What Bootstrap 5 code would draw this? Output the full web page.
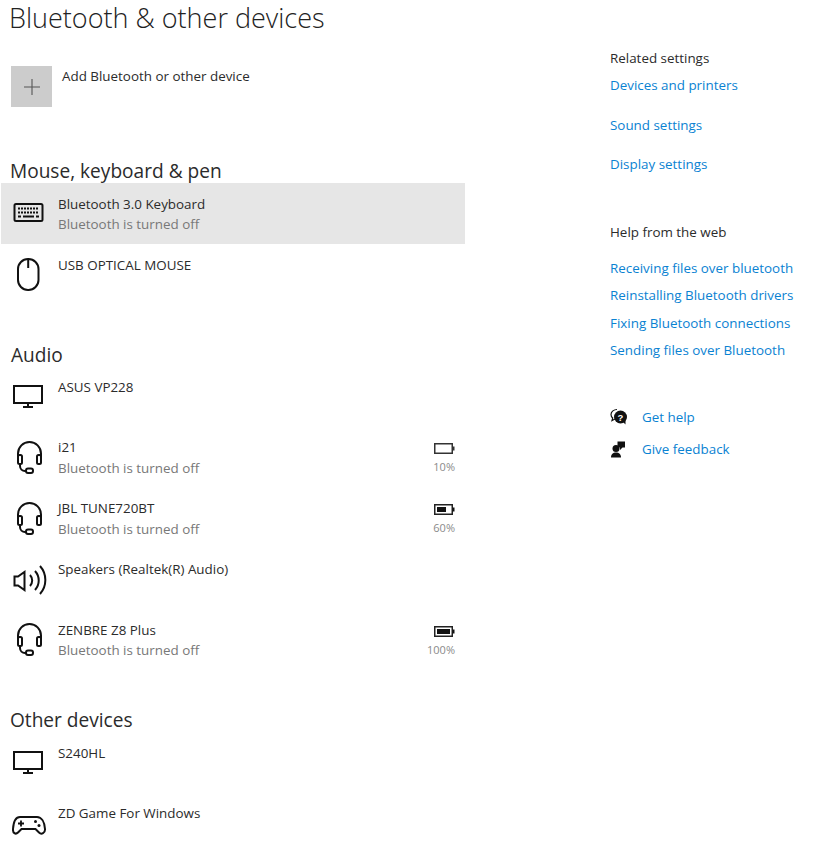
<!DOCTYPE html>
<html lang="en">
<head>
<meta charset="utf-8">
<title>Bluetooth &amp; other devices</title>
<link href="https://cdn.jsdelivr.net/npm/bootstrap@5.3.0/dist/css/bootstrap.min.css" rel="stylesheet">
<style>
body{font-family:"Open Sans","Noto Sans",sans-serif;color:#2b2b2b;background:#fff;font-size:13.4px;overflow:hidden}
.shell{width:814px;height:866px}
.leftpane{width:464px;margin-left:1px;flex:none}
.rightpane{margin-left:145px;width:204px;padding-top:48px}
.page-title{font-size:27px;font-weight:300;line-height:36px;margin:0 0 0 8px;color:#222}
.add-row{padding:30px 0 0 10px;height:122px;gap:10px}
.plus-tile{width:41px;height:41px;background:#ccc;flex:none}
.add-label{line-height:20px}
.sect{font-size:19.1px;font-weight:400;line-height:24px;padding-top:1px;margin:0 0 0 9px;color:#2b2b2b}
.sect-audio{margin-left:10px;margin-bottom:-1px}
.dev{height:61px;padding-left:11px}
.dev-sel{background:#e6e6e6}
.dev-short{height:60.75px}
.dev-tail{height:60.5px}
.ico{width:36px;height:36px;margin-top:13px;flex:none;margin-right:10px}
.dev-text{padding-top:10.5px;line-height:20.5px}
.dev-sub{color:#787878}
.batt{width:40px;margin-right:10px;padding-top:16.5px;color:#8a8a8a;font-size:11px;line-height:18px}
.batt svg{display:block;margin-left:auto;margin-bottom:4px}
.gap-audio{height:37px}
.gap-other{height:37.5px}
.side-head{line-height:20px;margin:0}
.side-link{display:block;color:#0a82d2;text-decoration:none;line-height:20px}
.stack-a{gap:19.5px;margin-top:7px;margin-bottom:48px}
.stack-b{gap:7.3px;margin-top:16px;margin-bottom:47px}
.stack-c{gap:12px}
.side-ico{width:18px;height:18px;flex:none;margin-right:14px}
</style>
</head>
<body>
<div class="shell d-flex">
  <div class="leftpane">
    <h1 class="page-title">Bluetooth &amp; other devices</h1>
    <div class="add-row d-flex">
      <div class="plus-tile d-flex align-items-center justify-content-center">
        <svg width="18" height="18" viewBox="0 0 18 18"><path d="M9 1v16M1 9h16" stroke="#555" stroke-width="1.1" fill="none"/></svg>
      </div>
      <div class="add-label">Add Bluetooth or other device</div>
    </div>
    <h2 class="sect">Mouse, keyboard &amp; pen</h2>
    <div class="dev dev-sel d-flex">
      <svg class="ico" viewBox="0 0 36 36" fill="none" stroke="#111" stroke-width="2"><rect x="2.5" y="8" width="28" height="17" rx="1.5"/><path d="M6 12.5h21M6 16.5h21" stroke-width="2" stroke-dasharray="2 1"/><path d="M6 20.5h3M11 20.5h11M24 20.5h3" stroke-width="2"/></svg>
      <div class="dev-text"><div>Bluetooth 3.0 Keyboard</div><div class="dev-sub">Bluetooth is turned off</div></div>
    </div>
    <div class="dev d-flex">
      <svg class="ico" viewBox="0 0 36 36" fill="none" stroke="#111" stroke-width="2"><rect x="6" y="2" width="20.5" height="31" rx="10"/><path d="M16.2 2v9"/></svg>
      <div class="dev-text"><div>USB OPTICAL MOUSE</div></div>
    </div>
    <div class="gap-audio"></div>
    <h2 class="sect sect-audio">Audio</h2>
    <div class="dev dev-short d-flex">
      <svg class="ico" viewBox="0 0 36 36" fill="none" stroke="#111" stroke-width="2"><rect x="2" y="7" width="28" height="17"/><path d="M16 24v4M11 28h10"/></svg>
      <div class="dev-text"><div>ASUS VP228</div></div>
    </div>
    <div class="dev dev-short d-flex">
      <svg class="ico" viewBox="0 0 36 36" fill="none" stroke="#111" stroke-width="2"><path d="M6 17v-3.500a11.500 11.500 0 0 1 23 0V17"/><rect x="6" y="15" width="4" height="9" rx="1.500"/><rect x="25" y="15" width="4" height="9" rx="1.500"/><path d="M8 24v2a5 5 0 0 0 5 5h1"/><rect x="14" y="28.500" width="7" height="4.500" rx="2"/></svg>
      <div class="dev-text"><div>i21</div><div class="dev-sub">Bluetooth is turned off</div></div>
      <div class="batt ms-auto text-end">
        <svg width="21" height="11" viewBox="0 0 21 11" fill="none"><rect x=".75" y=".75" width="17.500" height="9.500" stroke="#333" stroke-width="1.500"/><path d="M18.500 3.500h2v4h-2z" fill="#333"/></svg>
        10%
      </div>
    </div>
    <div class="dev dev-short d-flex">
      <svg class="ico" viewBox="0 0 36 36" fill="none" stroke="#111" stroke-width="2"><path d="M6 17v-3.500a11.500 11.500 0 0 1 23 0V17"/><rect x="6" y="15" width="4" height="9" rx="1.500"/><rect x="25" y="15" width="4" height="9" rx="1.500"/><path d="M8 24v2a5 5 0 0 0 5 5h1"/><rect x="14" y="28.500" width="7" height="4.500" rx="2"/></svg>
      <div class="dev-text"><div>JBL TUNE720BT</div><div class="dev-sub">Bluetooth is turned off</div></div>
      <div class="batt ms-auto text-end">
        <svg width="21" height="11" viewBox="0 0 21 11" fill="none"><rect x=".75" y=".75" width="17.500" height="9.500" stroke="#222" stroke-width="1.500"/><path d="M18.500 3.500h2v4h-2zM3 3h9v5H3z" fill="#111"/></svg>
        60%
      </div>
    </div>
    <div class="dev dev-short d-flex">
      <svg class="ico" viewBox="0 0 36 36" fill="none" stroke="#111" stroke-width="2"><path d="M2.500 15.500h3.500L12.500 11v18L6 24.500H2.500z"/><path d="M18 14a8 8 0 0 1 0 11M23 10a14 14 0 0 1 0 19M28 5a21 21 0 0 1 0 28"/></svg>
      <div class="dev-text"><div>Speakers (Realtek(R) Audio)</div></div>
    </div>
    <div class="dev dev-short d-flex">
      <svg class="ico" viewBox="0 0 36 36" fill="none" stroke="#111" stroke-width="2"><path d="M6 17v-3.500a11.500 11.500 0 0 1 23 0V17"/><rect x="6" y="15" width="4" height="9" rx="1.500"/><rect x="25" y="15" width="4" height="9" rx="1.500"/><path d="M8 24v2a5 5 0 0 0 5 5h1"/><rect x="14" y="28.500" width="7" height="4.500" rx="2"/></svg>
      <div class="dev-text"><div>ZENBRE Z8 Plus</div><div class="dev-sub">Bluetooth is turned off</div></div>
      <div class="batt ms-auto text-end">
        <svg width="21" height="11" viewBox="0 0 21 11" fill="none"><rect x=".75" y=".75" width="17.500" height="9.500" stroke="#222" stroke-width="1.500"/><path d="M18.500 3.500h2v4h-2zM3 3h13v5H3z" fill="#111"/></svg>
        100%
      </div>
    </div>
    <div class="gap-other"></div>
    <h2 class="sect">Other devices</h2>
    <div class="dev dev-tail d-flex">
      <svg class="ico" viewBox="0 0 36 36" fill="none" stroke="#111" stroke-width="2"><rect x="2" y="7" width="28" height="17"/><path d="M16 24v4M11 28h10"/></svg>
      <div class="dev-text"><div>S240HL</div></div>
    </div>
    <div class="dev dev-tail d-flex">
      <svg class="ico" viewBox="0 0 36 36" fill="none" stroke="#111" stroke-width="2"><path d="M8 11h17c4.500 0 7.500 5 8 12 .300 4-3.500 6-6 3.500L23.500 23h-14L6 26.500C3.500 29 .700 27 1 23c.500-7 3-12 7-12z"/><path d="M6 17.500h6M9 14.500v6" stroke-width="1.800"/><circle cx="23.500" cy="15.500" r="1.500" fill="#111" stroke="none"/><circle cx="27" cy="19.500" r="1.500" fill="#111" stroke="none"/></svg>
      <div class="dev-text"><div>ZD Game For Windows</div></div>
    </div>
  </div>
  <div class="rightpane">
    <p class="side-head">Related settings</p>
    <div class="d-flex flex-column stack-a">
      <a class="side-link" href="#">Devices and printers</a>
      <a class="side-link" href="#">Sound settings</a>
      <a class="side-link" href="#">Display settings</a>
    </div>
    <p class="side-head">Help from the web</p>
    <div class="d-flex flex-column stack-b">
      <a class="side-link" href="#">Receiving files over bluetooth</a>
      <a class="side-link" href="#">Reinstalling Bluetooth drivers</a>
      <a class="side-link" href="#">Fixing Bluetooth connections</a>
      <a class="side-link" href="#">Sending files over Bluetooth</a>
    </div>
    <div class="d-flex flex-column stack-c">
      <div class="d-flex align-items-center">
        <svg class="side-ico" viewBox="0 0 18 18"><path d="M7 1.500c-3 0-6 2-6 5 0 1.500.700 2.700 1.700 3.500L2 12.500 5 11" fill="none" stroke="#111" stroke-width="1.200"/><circle cx="10.500" cy="9" r="6.500" fill="#111"/><path d="M13 14l2.500 2.500V11z" fill="#111"/><text x="10.500" y="12.500" font-size="9.500" font-weight="700" fill="#fff" text-anchor="middle" font-family="Liberation Sans">?</text></svg>
        <a class="side-link" href="#">Get help</a>
      </div>
      <div class="d-flex align-items-center">
        <svg class="side-ico" viewBox="0 0 18 18" fill="#111"><circle cx="6" cy="8.500" r="3.500"/><path d="M1 17.500c0-3.500 2-5 5-5s5 1.500 5 5z"/><path d="M7.500 1.500H15v6h-2.500L10 10V7.500H7.500z"/></svg>
        <a class="side-link" href="#">Give feedback</a>
      </div>
    </div>
  </div>
</div>
<script src="https://cdn.jsdelivr.net/npm/bootstrap@5.3.0/dist/js/bootstrap.bundle.min.js"></script>
</body>
</html>
